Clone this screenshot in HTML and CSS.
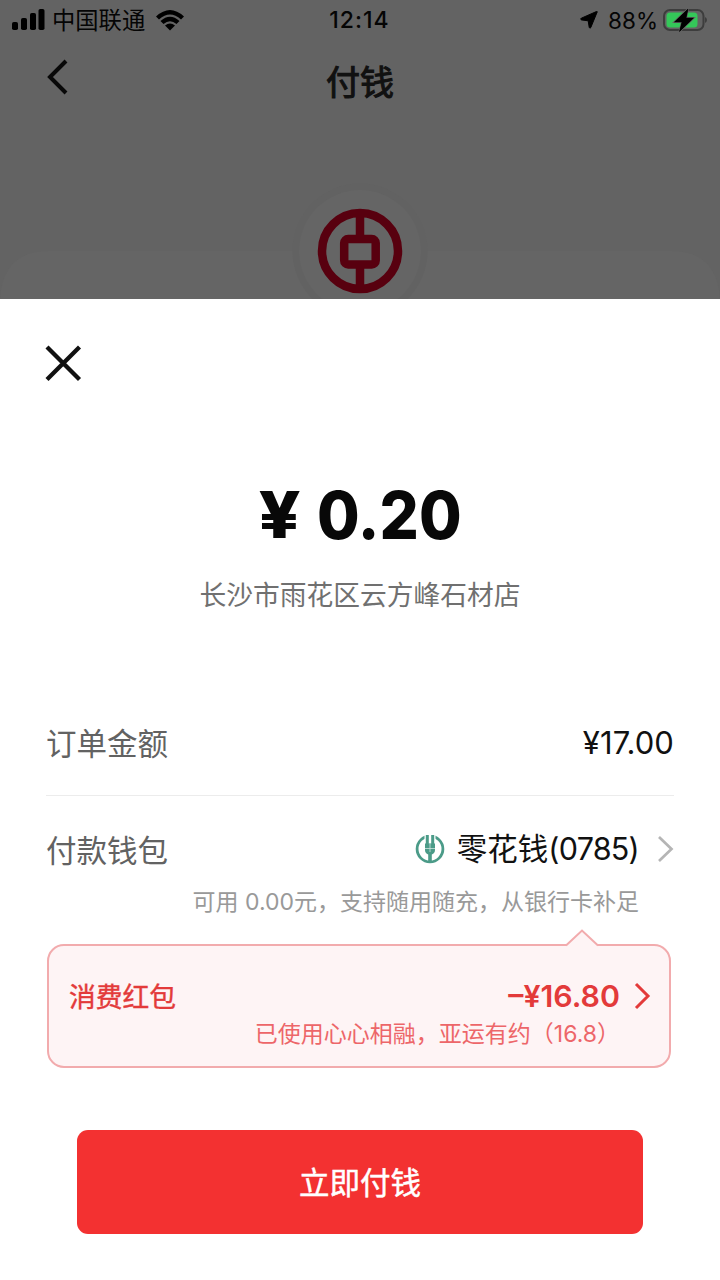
FILE: index.html
```html
<!DOCTYPE html>
<html lang="zh-CN">
<head>
<meta charset="utf-8">
<title>付钱</title>
<link rel="stylesheet" href="styles.css">
</head>
<body>
<div class="screen">
  <header class="backdrop">
    <div class="status">
      <div class="status-left">
        <svg class="signal" width="33" height="22" viewBox="0 0 33 22"><rect x="0" y="13" width="6" height="8" rx="1.8"/><rect x="9" y="9" width="6" height="12" rx="1.8"/><rect x="18" y="4" width="6" height="17" rx="1.8"/><rect x="26.500" y="0" width="6" height="21" rx="1.8"/></svg>
        <span class="carrier">中国联通</span>
        <svg class="wifi" width="30" height="22" viewBox="0 0 30 22"><path d="M1 7.500Q15-5.500 29 7.500L26 10.500Q15 .5 4 10.500Z"/><path d="M5.500 12Q15 3.500 24.500 12L21.500 15Q15 9.500 8.500 15Z"/><path d="M10 16.500Q15 12.500 20 16.500L15 21.500Z"/></svg>
      </div>
      <span class="clock">12:14</span>
      <div class="status-right">
        <svg class="location" width="18" height="18" viewBox="0 0 18 18"><path d="M17.300 .7 10.800 16.500Q9.900 18 9.200 16.300L8.200 9.800 1.500 8.900Q-.2 8.200 1.300 7.200L16.500 .5Z" stroke="#000" stroke-width="1"/></svg>
        <span class="percent">88%</span>
        <svg class="battery" width="44" height="24" viewBox="0 0 44 24"><rect x="1" y="2" width="39.500" height="20" rx="6" fill="none" stroke="#3d3d3d" stroke-width="2"/><rect x="3.500" y="4.500" width="31" height="15" rx="3.500" fill="#34c759"/><path d="M42 9v6q2-1 2-3t-2-3Z" fill="#3d3d3d"/><path d="M25 1 11.500 14H19L16.500 23.500 30.500 10H23Z" fill="#000" stroke="#636363" stroke-width="2" paint-order="stroke"/><path d="M25 1 11.500 14H19L16.500 23.500 30.500 10H23Z" stroke="#000" stroke-width=".5"/></svg>
      </div>
    </div>
    <nav class="nav">
      <svg class="back" width="24" height="36" viewBox="0 0 24 36"><path d="M20 2 4 18 20 34" fill="none" stroke="#080808" stroke-width="4"/></svg>
      <h1 class="title">付钱</h1>
    </nav>
    <svg class="merchant" width="720" height="179" viewBox="0 0 720 179">
      <path d="M0 179Q3 131 49 131H671Q717 131 720 179Z" fill="#656565"/>
      <circle cx="360" cy="131" r="67.500" fill="#626262"/>
      <circle cx="360" cy="131" r="61" fill="#656565"/>
      <g fill="none" stroke="#58000f" stroke-width="8.500"><circle cx="360" cy="131" r="38"/><rect x="344.200" y="119" width="31.500" height="25.500" rx="4"/><path d="M360 93v26M360 144v26"/></g>
    </svg>
  </header>

  <main class="sheet">
    <div class="close-row">
      <svg width="38" height="38" viewBox="0 0 38 38"><path d="M3 3 35.500 35.500M35.500 3 3 35.500" stroke="#111" stroke-width="4.300"/></svg>
    </div>
    <div class="amount"><span class="yen">¥</span><span class="value">0.20</span></div>
    <div class="store">长沙市雨花区云方峰石材店</div>
    <section class="row order">
      <span class="label">订单金额</span>
      <span class="price">¥17.00</span>
    </section>
    <section class="row wallet">
      <span class="label">付款钱包</span>
      <div class="method">
        <svg width="30" height="30" viewBox="0 0 30 30"><circle cx="15" cy="15" r="12.900" fill="none" stroke="#4b9b88" stroke-width="2.800"/><path d="M9.500 0h11v8h-11Z" fill="#fff"/><path d="M12.300 1v9M17.700 1v9" stroke="#4b9b88" stroke-width="3"/><path d="M10 9.500h10v6.500q0 3-3.200 4.500V28h-3.600v-7.500Q10 19 10 16Z" fill="#4b9b88"/><path d="M10 14.500h10M15 10v8" stroke="#cfe4df" stroke-width=".8"/></svg>
        <span class="wallet-name">零花钱<span class="digits">(0785)</span></span>
        <svg class="chevron" width="17" height="28" viewBox="0 0 17 28"><path d="M2 2 14.500 14 2 26" fill="none" stroke="#b5b5b5" stroke-width="2.700"/></svg>
      </div>
    </section>
    <div class="hint">可用 <span class="hint-digits">0.00</span>元，支持随用随充，从银行卡补足</div>
    <section class="coupon">
      <svg class="pointer" width="34" height="18" viewBox="0 0 34 18"><path d="M1 17 17 1.500 33 17V18H1Z" fill="#fef4f5"/><path d="M1 16.500 17 1.500 33 16.500" fill="none" stroke="#f2abad" stroke-width="2"/></svg>
      <div class="coupon-main">
        <span class="coupon-label">消费红包</span>
        <span class="discount">–¥16.80</span>
        <svg width="17" height="28" viewBox="0 0 17 28"><path d="M2 2 14 14 2 26" fill="none" stroke="#e33a3a" stroke-width="3"/></svg>
      </div>
      <div class="coupon-note">已使用心心相融，亚运有约（<span class="note-digits">16.8</span>）</div>
    </section>
    <button class="pay">立即付钱</button>
  </main>
</div>
</body>
</html>
```
FILE: styles.css
```css
* { box-sizing: border-box; }
body { margin: 0; background: #fff; font-family: Inter, "Noto Sans CJK SC", sans-serif; color: #111; }
svg { display: block; flex: none; }
.screen { width: 720px; height: 1280px; overflow: hidden; white-space: nowrap; }

.backdrop { height: 299px; background: #636363; }
.status { height: 40px; padding: 0 13px 0 12px; display: grid; grid-template-columns: 1fr auto 1fr; align-items: center; color: #050505; }
.status-left, .status-right { display: flex; align-items: center; }
.status-right { justify-content: flex-end; }
.carrier { margin-left: 7px; padding-top: 2px; font-size: 23.300px; line-height: 34px; }
.wifi { margin-left: 10px; }
.clock { font-size: 23px; font-weight: 500; letter-spacing: 1px; }
.percent { margin: 0 5px 0 10px; font-size: 22.500px; }
.nav { height: 80px; padding: 0 46px; display: grid; grid-template-columns: 1fr auto 1fr; align-items: start; }
.back { margin-top: 19px; }
.title { margin: 18px 0 0; font-size: 34px; line-height: 50px; font-weight: 400; -webkit-text-stroke: 1.100px #111; }

.sheet { height: 981px; background: #fff; display: flex; flex-direction: column; }
.close-row { height: 166px; padding: 45px 0 0 44px; }
.amount { height: 100px; padding-left: 7px; display: flex; align-items: center; justify-content: center; gap: 14px; font-weight: 800; color: #080808; line-height: 98px; }
.yen { font-size: 64px; transform: scaleX(1.14); }
.value { font-size: 66px; transform: scaleX(.935); }
.store { height: 60px; line-height: 60px; text-align: center; font-size: 26.750px; color: #707070; }
.row { margin: 0 46px; display: flex; align-items: center; justify-content: space-between; font-size: 30.500px; }
.label { color: #626262; }
.order { height: 107px; margin-top: 64px; padding-bottom: 1px; border-bottom: 1px solid #ececec; }
.price { padding-top: 2px; font-size: 31px; letter-spacing: .1px; }
.wallet { height: 80px; padding-top: 25px; }
.method { display: flex; align-items: center; }
.wallet-name { margin: 0 18px 0 12px; line-height: 44px; }
.digits { letter-spacing: -.75px; }
.hint { height: 54px; padding-right: 81px; line-height: 53px; text-align: right; font-size: 23px; color: #999; }
.coupon { position: relative; height: 124px; margin: 14px 49px 0 47px; padding: 31px 18px 0 20px; border: 2px solid #f2abad; border-radius: 17px; background: #fef4f5; }
.pointer { position: absolute; top: -17px; right: 70px; }
.coupon-main { display: flex; align-items: center; height: 38px; color: #e33a3a; font-size: 26.750px; }
.coupon-label { padding-bottom: 2px; -webkit-text-stroke: .4px #e33a3a; }
.discount { margin: 0 14px 0 auto; font-size: 30.300px; font-weight: 600; }
.coupon-note { height: 36px; padding-right: 31px; line-height: 38px; text-align: right; font-size: 23px; color: #ed6669; }
.pay { flex: none; height: 104px; margin: 62px 77px 0; padding: 2px 0 0; border: 0; border-radius: 11px; background: #f33131; color: #fff; font: 400 30.500px/102px Inter, "Noto Sans CJK SC", sans-serif; -webkit-text-stroke: .5px #fff; }
```
